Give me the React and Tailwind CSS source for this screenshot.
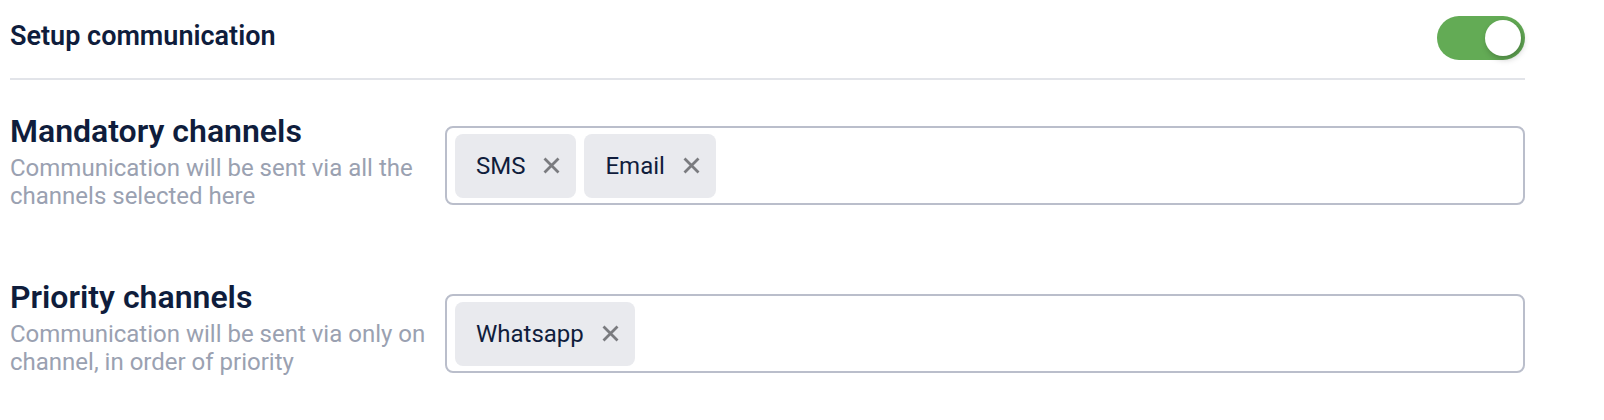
import React from "react";

const channelRows = [
  {
    title: "Mandatory channels",
    description: "Communication will be sent via all the channels selected here",
    chips: ["SMS", "Email"],
    boxOffset: "mt-[14px]",
  },
  {
    title: "Priority channels",
    description: "Communication will be sent via only on channel, in order of priority",
    chips: ["Whatsapp"],
    boxOffset: "mt-[16px]",
  },
];

function CloseIcon() {
  return (
    <svg width="17" height="17" viewBox="0 0 17 17" aria-hidden="true">
      <path
        d="M1.5 1.5 L15.5 15.5 M15.5 1.5 L1.5 15.5"
        stroke="#7a7b7f"
        strokeWidth="2.8"
        fill="none"
      />
    </svg>
  );
}

function Chip({ label }) {
  return (
    <div className="flex h-[64px] items-center rounded-[8px] bg-[#e9eaee] pl-[21px] pr-[16px]">
      <span className="text-[24px] leading-none text-[#101d3c]">{label}</span>
      <span className="ml-[18px] flex items-center">
        <CloseIcon />
      </span>
    </div>
  );
}

function Toggle({ on = true }) {
  return (
    <div
      className={`flex h-[44px] w-[88px] items-center rounded-full p-[4px] ${
        on ? "justify-end bg-[#63ab55]" : "justify-start bg-gray-300"
      }`}
    >
      <div className="h-[36px] w-[36px] rounded-full bg-white shadow-[2px_3px_6px_rgba(0,0,0,0.25)]" />
    </div>
  );
}

export default function App() {
  return (
    <div
      className="h-[420px] w-[1604px] bg-white pl-[10px]"
      style={{ fontFamily: "Roboto, 'Liberation Sans', sans-serif" }}
    >
      <div className="w-[1515px]">
        <div className="flex items-center justify-between border-b-2 border-[#e2e4e9] pt-[16px] pb-[18px]">
          <h2 className="-mt-[3px] text-[27px] font-semibold text-[#0f1d3c]">
            Setup communication
          </h2>
          <Toggle />
        </div>

        <div className="flex flex-col gap-[68px] pt-[32px]">
          {channelRows.map((row) => (
            <div key={row.title} className="flex items-start">
              <div className="w-[435px] shrink-0">
                <h3 className="text-[32px] font-semibold leading-[38px] text-[#0f1d3c]">
                  {row.title}
                </h3>
                <p className="mt-[4px] w-[425px] text-[24px] leading-[28px] text-[#9aa1b1]">
                  {row.description}
                </p>
              </div>
              <div
                className={`flex h-[79px] flex-1 items-center gap-[8px] rounded-[8px] border-2 border-[#babecb] px-[8px] ${row.boxOffset}`}
              >
                {row.chips.map((chip) => (
                  <Chip key={chip} label={chip} />
                ))}
              </div>
            </div>
          ))}
        </div>
      </div>
    </div>
  );
}
